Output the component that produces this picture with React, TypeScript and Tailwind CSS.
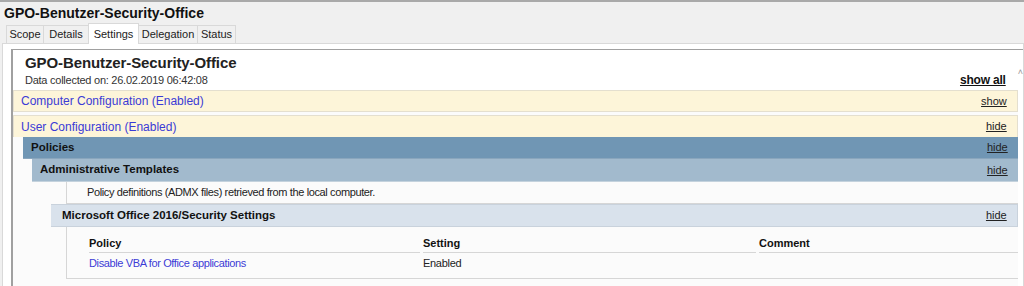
const font = { fontFamily: '"Liberation Sans", Arial, sans-serif' };

function Tab({ label, width, active }: { label: string; width: string; active?: boolean }) {
  if (active) {
    return (
      <div className={`relative z-10 -mb-px -ml-px flex h-[21px] items-center justify-center border border-b-0 border-[#d9d9d9] bg-white text-[11px] text-[#222] ${width}`}>
        {label}
      </div>
    );
  }
  return (
    <div className={`-ml-px flex h-[18px] items-center justify-center border border-b-0 border-[#d9d9d9] bg-[#f0f0f0] text-[11px] text-[#222] first:ml-0 ${width}`}>
      {label}
    </div>
  );
}

function Band({
  label,
  action,
  className,
  textClass,
}: {
  label: string;
  action: string;
  className: string;
  textClass: string;
}) {
  return (
    <div className={`flex h-[22px] items-center justify-between pr-[10px] ${className}`}>
      <span className={textClass}>{label}</span>
      <span className="text-[11px] text-[#222] underline">{action}</span>
    </div>
  );
}

export default function App() {
  return (
    <div className="h-[286px] w-[1024px] overflow-hidden border-t-2 border-[#a9a9a9] bg-[#f0f0f0]" style={font}>
      {/* window title */}
      <div className="pl-[4px] pt-[1px] text-[14px] leading-[20px] font-bold text-[#111]">
        GPO-Benutzer-Security-Office
      </div>

      {/* tabs */}
      <div className="flex items-end pl-[6px]">
        <Tab label="Scope" width="w-[38px]" />
        <Tab label="Details" width="w-[46px]" />
        <Tab label="Settings" width="w-[51px]" active />
        <Tab label="Delegation" width="w-[60px]" />
        <Tab label="Status" width="w-[39px]" />
      </div>

      {/* tab page */}
      <div className="ml-[2px] h-[300px] border border-[#d9d9d9] bg-white pl-[8px] pt-[5px]">
        <div className="flex h-[300px] border-t border-l-2 border-[#a0a0a0] bg-white">
          <div className="w-[1005px] bg-[#fbfbfb]">
            {/* report header */}
            <div className="bg-white pb-[3px] pl-[12px] pr-[12px] pt-[4px]">
              <div className="text-[15px] leading-[18px] font-bold tracking-[-0.1px] text-[#222]">GPO-Benutzer-Security-Office</div>
              <div className="mt-[1px] flex items-end justify-between">
                <span className="text-[11px] leading-[14px] tracking-[-0.25px] text-[#333]">Data collected on: 26.02.2019 06:42:08</span>
                <span className="text-[12px] leading-[14px] font-bold tracking-[-0.2px] text-[#111] underline">show all</span>
              </div>
            </div>

            <Band
              label="Computer Configuration (Enabled)"
              action="show"
              className="border border-[#e4dfcf] bg-[#fdf5d9] pl-[7px]"
              textClass="text-[12px] text-[#3b3bd6]"
            />
            <div className="h-[3px]" />
            <Band
              label="User Configuration (Enabled)"
              action="hide"
              className="border border-b-0 border-[#e4dfcf] bg-[#fdf5d9] pl-[7px]"
              textClass="text-[12px] text-[#3b3bd6]"
            />

            {/* Policies */}
            <div className="ml-[10px]">
              <Band
                label="Policies"
                action="hide"
                className="border-b border-[#8aa6bd] bg-[#7096b4] pl-[8px]"
                textClass="text-[11.5px] font-bold text-[#111]"
              />
              <div className="ml-[9px]">
                <Band
                  label="Administrative Templates"
                  action="hide"
                  className="h-[23px] border-b border-[#c4d2dd] bg-[#a2bacd] pl-[8px]"
                  textClass="text-[11.5px] font-bold text-[#111]"
                />
                <div className="ml-[34px] flex h-[22px] items-center border-l border-b border-[#d6d6d6] bg-[#fbfbfb] pl-[20px]">
                  <span className="text-[11px] tracking-[-0.38px] text-[#222]">
                    Policy definitions (ADMX files) retrieved from the local computer.
                  </span>
                </div>
                <div className="ml-[19px]">
                  <Band
                    label="Microsoft Office 2016/Security Settings"
                    action="hide"
                    className="h-[23px] border border-l-0 border-[#c9d2dc] bg-[#d9e2ec] pl-[11px]"
                    textClass="text-[11.5px] font-bold text-[#111]"
                  />
                  <div className="ml-[15px] h-[52px] border-l border-b border-[#d6d6d6] bg-[#fbfbfb] pl-[22px] pt-[9px]">
                    <div className="grid grid-cols-[331px_333px_1fr] gap-x-[3px]">
                      <div className="border-b border-[#d6d6d6] pb-[2px] text-[11px] leading-[14px] font-bold text-[#111]">Policy</div>
                      <div className="border-b border-[#d6d6d6] pb-[2px] text-[11px] leading-[14px] font-bold text-[#111]">Setting</div>
                      <div className="border-b border-[#d6d6d6] pb-[2px] text-[11px] leading-[14px] font-bold text-[#111]">Comment</div>
                      <div className="pt-[3px] text-[11px] leading-[14px] tracking-[-0.37px] text-[#3b3bd6]">Disable VBA for Office applications</div>
                      <div className="pt-[3px] text-[11px] leading-[14px] tracking-[-0.3px] text-[#222]">Enabled</div>
                      <div />
                    </div>
                  </div>
                </div>
              </div>
            </div>
          </div>
          {/* scrollbar sliver */}
          <div className="flex-1 bg-white pt-[17px] text-center text-[9px] leading-[10px] text-[#9a9a9a]">
            ˄
          </div>
        </div>
      </div>
    </div>
  );
}
